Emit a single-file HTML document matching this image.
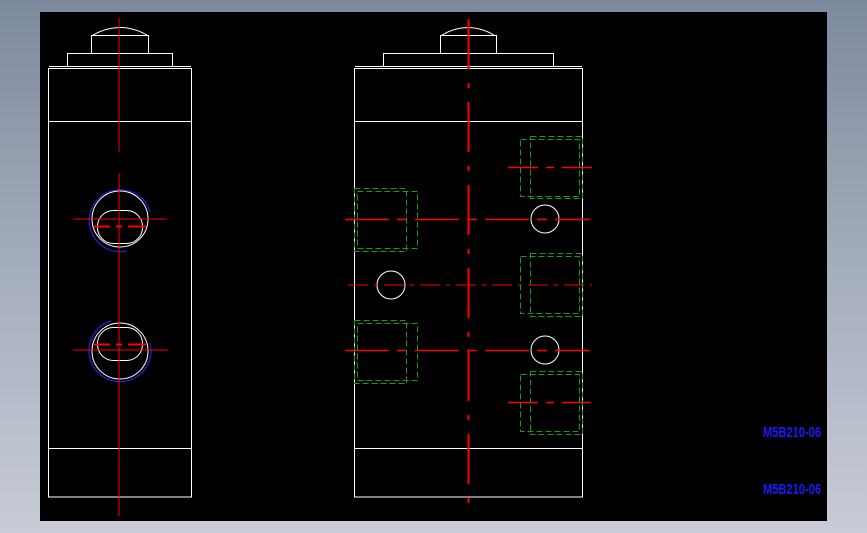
<!DOCTYPE html>
<html><head><meta charset="utf-8"><style>
html,body{margin:0;padding:0;width:867px;height:533px;overflow:hidden;background:linear-gradient(#7d899c,#a4adbd 50%,#c8ccd6);}
svg{position:absolute;left:0;top:0}
</style></head><body>
<svg width="867" height="533" viewBox="0 0 867 533" xmlns="http://www.w3.org/2000/svg">
<rect x="40" y="12" width="787" height="509" fill="#000"/>
<g fill="none" stroke="#fff" stroke-width="1">
<path d="M48.5 497 V68.5 H191.5 V497 Z M49 66.5 H191"/>
<path d="M67.5 66 V53.5 H172.5 V66"/>
<path d="M91.5 53 V35.5 H148.5 V53"/>
<path d="M93 35 Q120 20 147 35"/>
<path d="M48.5 121.5 H191.5 M48.5 448.5 H191.5"/>
<circle cx="120" cy="219" r="28"/>
<rect x="97.5" y="210.5" width="45" height="33" rx="16"/>
<circle cx="120" cy="351" r="28"/>
<rect x="97.5" y="327.5" width="45" height="33" rx="16"/>
<path d="M354.5 497 V68.5 H582.5 V497 Z M355 66.5 H582"/>
<path d="M383.5 66 V53.5 H553.5 V66"/>
<path d="M440.5 53 V35.5 H496.5 V53"/>
<path d="M442 35 Q468 20 494 35"/>
<path d="M354.5 121.5 H582.5 M354.5 448.5 H582.5"/>
<circle cx="545" cy="219" r="14"/>
<circle cx="391" cy="285" r="14"/>
<circle cx="545" cy="350" r="14"/>
</g>
<g fill="none" stroke="#2a1fd0" stroke-width="1.2">
<path d="M150 212 A31 31 0 1 0 127 251"/>
<path d="M111 321 A31 31 0 1 0 150 343"/>
</g>
<g fill="none" stroke="#f00" stroke-width="1" shape-rendering="crispEdges">
<path d="M119 18 V152 M119 173 V516"/>
<path d="M73 219 H167 M73 350 H168"/>
</g>
<g fill="none" stroke="#f00" stroke-width="1">
<path d="M94 226.5 H110 M116 226.5 H122 M128 226.5 H146" stroke-width="2"/>
<path d="M94 344.5 H110 M116 344.5 H122 M128 344.5 H146" stroke-width="2"/>
<path d="M468.5 19 V512" stroke-width="2" stroke-dasharray="50 14 5 14"/>
<path d="M345 219.5 H590" stroke-width="1.5" stroke-dasharray="44 8 10 8"/>
<path d="M345 350.5 H590" stroke-width="1.5" stroke-dasharray="44 8 10 8"/>
<path d="M348 285 H592" stroke-dasharray="20 6 4 6" shape-rendering="crispEdges"/>
<path d="M508 167.5 H592 M508 402.5 H591" stroke-width="1.5" stroke-dasharray="30 8 8 8"/>
</g>
<g fill="none" stroke="#1a9a1a" stroke-width="1" stroke-dasharray="6 3">
<rect x="520.5" y="139.5" width="59" height="57"/>
<rect x="530.5" y="136.5" width="52" height="62"/>
<rect x="520.5" y="256.5" width="59" height="57"/>
<rect x="530.5" y="253.5" width="52" height="63"/>
<rect x="520.5" y="374.5" width="59" height="57"/>
<rect x="530.5" y="371.5" width="52" height="63"/>
<rect x="354.5" y="188.5" width="52" height="63"/>
<rect x="357.5" y="191.5" width="60" height="57"/>
<rect x="354.5" y="320.5" width="52" height="63"/>
<rect x="357.5" y="323.5" width="60" height="57"/>
</g>
<g fill="#1a1aff" font-family="Liberation Sans Narrow, Liberation Sans, sans-serif" font-size="15" font-weight="bold">
<text x="763" y="437" textLength="58" lengthAdjust="spacingAndGlyphs">M5B210-06</text>
<text x="763" y="494" textLength="58" lengthAdjust="spacingAndGlyphs">M5B210-06</text>
</g>
</svg>
</body></html>
